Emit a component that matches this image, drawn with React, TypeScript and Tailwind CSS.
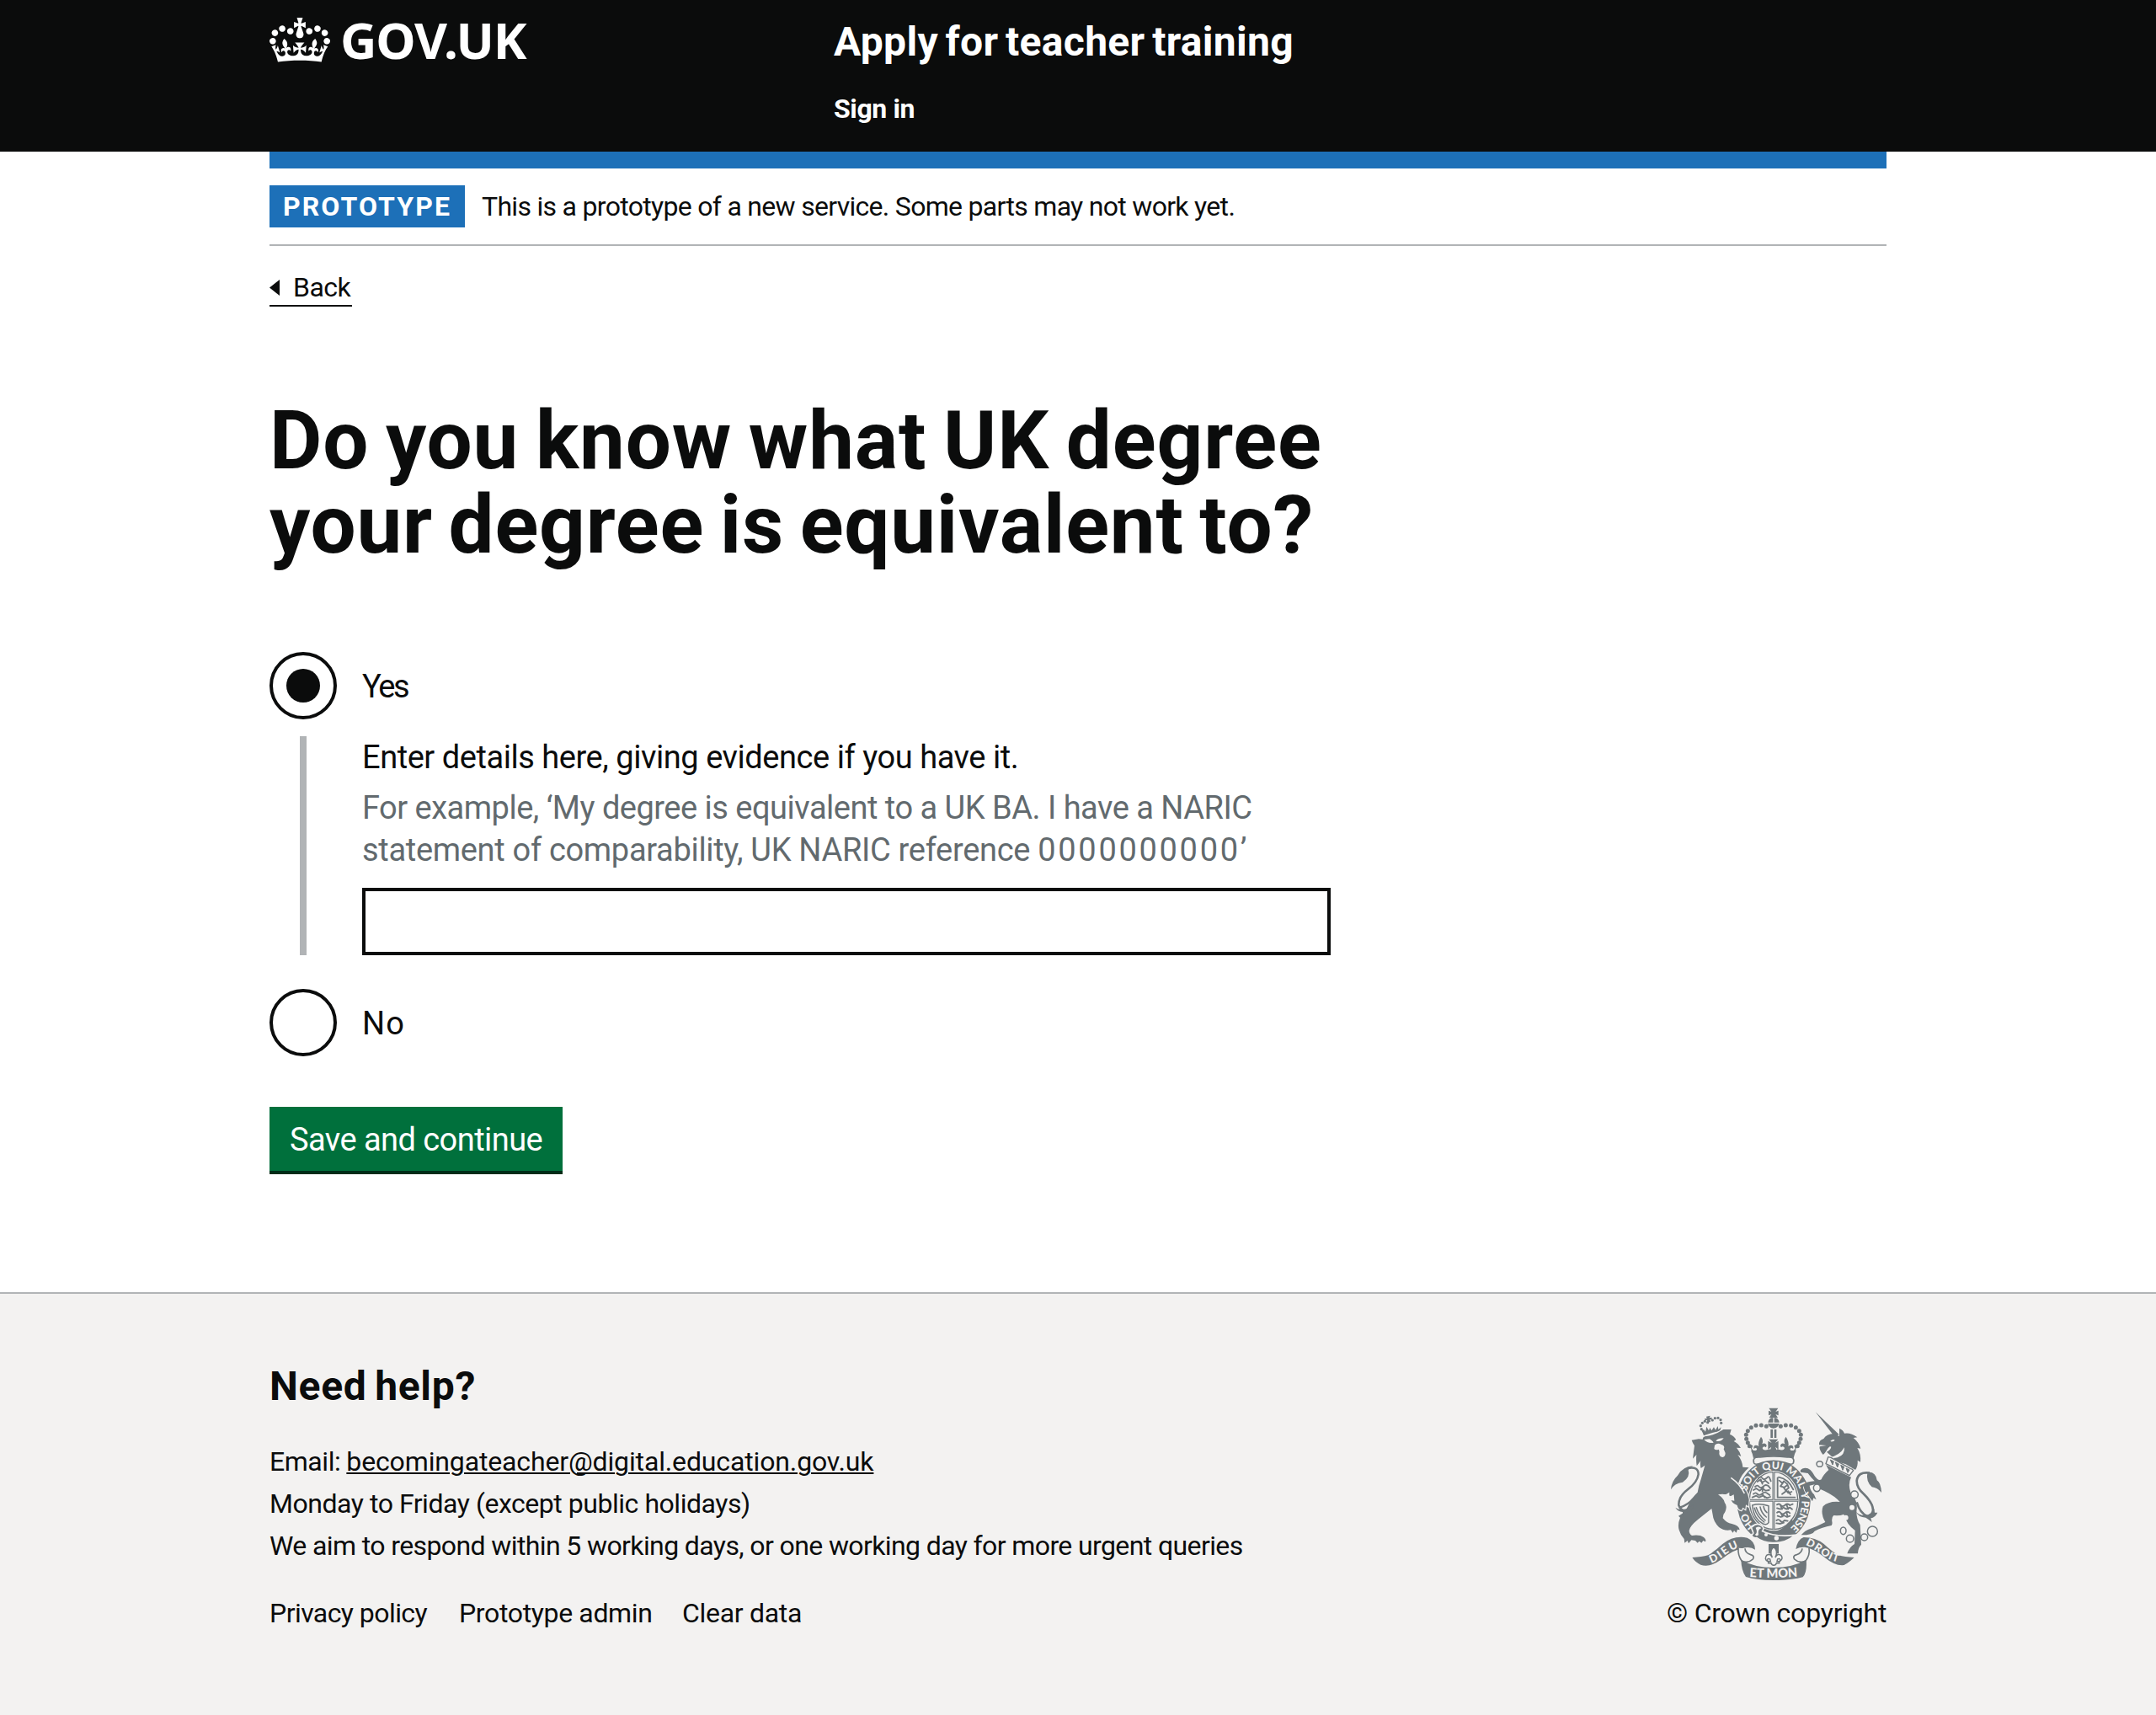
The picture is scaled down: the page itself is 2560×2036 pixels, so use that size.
import type { ReactNode } from "react";

const INK = "#6f777b";
const PAPER = "#f3f2f1";

function Crown() {
  return (
    <svg className="mt-px h-[53px] w-[72px] shrink-0" viewBox="0 0 132 97" aria-hidden="true">
      <path
        fill="currentColor"
        fillRule="evenodd"
        d="M25 30.2c3.5 1.5 7.7-.2 9.1-3.7 1.5-3.6-.2-7.8-3.9-9.2-3.6-1.4-7.6.3-9.1 3.9-1.4 3.5.3 7.5 3.9 9zM9 39.5c3.6 1.5 7.8-.2 9.2-3.7 1.5-3.6-.2-7.8-3.9-9.1-3.6-1.5-7.6.2-9.1 3.8-1.4 3.5.3 7.5 3.8 9zM4.4 57.2c3.5 1.5 7.7-.2 9.1-3.8 1.5-3.6-.2-7.7-3.9-9.1-3.5-1.5-7.6.3-9.1 3.8-1.4 3.5.3 7.6 3.9 9.1zm38.3-21.4c3.5 1.5 7.7-.2 9.1-3.8 1.5-3.6-.2-7.7-3.9-9.1-3.6-1.5-7.6.3-9.1 3.8-1.3 3.6.4 7.7 3.9 9.1zm64.4-5.6c-3.6 1.5-7.8-.2-9.1-3.7-1.5-3.6.2-7.8 3.8-9.2 3.6-1.4 7.7.3 9.2 3.9 1.3 3.5-.4 7.5-3.9 9zm15.9 9.3c-3.6 1.5-7.7-.2-9.1-3.7-1.5-3.6.2-7.8 3.7-9.1 3.6-1.5 7.7.2 9.2 3.8 1.5 3.5-.3 7.5-3.8 9zm4.7 17.7c-3.6 1.5-7.8-.2-9.2-3.8-1.5-3.6.2-7.7 3.9-9.1 3.6-1.5 7.7.3 9.2 3.8 1.3 3.5-.4 7.6-3.9 9.1zM89.3 35.8c-3.6 1.5-7.8-.2-9.2-3.8-1.4-3.6.2-7.7 3.9-9.1 3.6-1.5 7.7.3 9.2 3.8 1.4 3.6-.3 7.7-3.9 9.1zM69.7 17.7l8.9 4.7V9.3l-8.9 2.8c-.2-.3-.5-.6-.9-.9L72.4 0H59.6l3.5 11.2c-.3.3-.6.5-.9.9l-8.8-2.8v13.1l8.8-4.7c.3.3.6.7.9.9l-5 15.4v.1c-.2.8-.4 1.6-.4 2.4 0 4.1 3.1 7.5 7 8.1h.2c.3 0 .7.1 1 .1.4 0 .7 0 1-.1h.2c4-.6 7.1-4.1 7.1-8.1 0-.8-.1-1.7-.4-2.4V34l-5.1-15.4c.4-.2.7-.6 1-.9zM66 92.8c16.9 0 32.8 1.1 47.1 3.2 4-16.9 8.9-26.7 14-33.5l-9.6-3.4c1 4.9 1.1 7.2 0 10.2-1.5-1.4-3-4.3-4.2-8.7L108.6 76c2.8-2 5-3.2 7.5-3.3-4.4 9.4-10 11.9-13.6 11.2-4.3-.8-6.3-4.6-5.6-7.9 1-4.7 5.7-5.9 8-.5 4.3-8.7-3-11.4-7.6-8.8 7.1-7.2 7.9-13.5 2.1-21.1-8 6.1-8.1 12.3-4.5 20.8-4.7-5.4-12.1-2.5-9.5 6.2 3.4-5.2 7.9-2 7.2 3.1-.6 4.3-6.4 7.8-13.5 7.2-10.3-.9-10.9-8-11.2-13.8 2.5-.5 7.1 1.8 11 7.3L80.2 60c-4.1 4.4-8 5.3-12.3 5.4 1.4-4.4 8-11.6 8-11.6H55.5s6.4 7.2 7.9 11.6c-4.2-.1-8-1-12.3-5.4l1.4 16.4c3.9-5.5 8.5-7.7 10.9-7.3-.3 5.8-.9 12.8-11.1 13.8-7.2.6-12.9-2.9-13.5-7.2-.7-5 3.8-8.3 7.1-3.1 2.7-8.7-4.6-11.6-9.4-6.2 3.7-8.5 3.6-14.7-4.6-20.8-5.8 7.6-5 13.9 2.2 21.1-4.7-2.6-11.9.1-7.7 8.8 2.3-5.5 7.1-4.2 8.1.5.7 3.3-1.3 7.1-5.7 7.9-3.5.7-9-1.8-13.5-11.2 2.5.1 4.7 1.3 7.5 3.3l-4.7-15.4c-1.2 4.4-2.7 7.2-4.3 8.7-1.1-3-.9-5.3 0-10.2l-9.5 3.4c5 6.9 9.9 16.7 14 33.5 14.8-2.1 30.8-3.2 47.7-3.2z"
      />
    </svg>
  );
}

const crownDots: [number, number][] = [
  [412, 161], [394, 157], [375, 158], [358, 165], [346, 177], [340, 191], [341, 206], [346, 219], [352, 231],
];
const smallCrownDots: [number, number][] = [
  [181, 171], [178, 159], [184, 149], [193, 143], [203, 147], [220, 139], [229, 132], [240, 131], [249, 138], [251, 149],
];

function CrownHalf() {
  return (
    <g>
      {crownDots.map(([x, y]) => (
        <circle key={`${x}-${y}`} cx={x} cy={y} r="7.5" />
      ))}
      <path d="M393 198q10 12 4 26q10-6 15 2q3 6-2 10q-4-6-9-2l-3 4q2 8 12 8l14-4 4 6v12q-40 2-62 6q-4-22-20-44l18 8-4 10q8 12 16 6q6-6-2-8q-4 0-6 4q-4-12 6-14q6 0 11 4q-4-14 8-34z" />
    </g>
  );
}

function Crest() {
  return (
    <svg className="h-[205px] w-[250px]" viewBox="72 94 750 615" fill={INK} aria-label="Royal coat of arms">
      <defs>
        <path id="garter" d="M438 544C379 544 338 491 338 428C338 365 381 313 438 313C495 313 538 365 538 428C538 491 497 544 438 544" />
        <path id="ribbon-left" d="M216 648Q240 640 264 620Q290 598 330 588" />
        <path id="ribbon-right" d="M549 582Q583 596 612 620Q640 640 676 646" />
        <path id="ribbon-mid" d="M350 697Q437 704 526 695" />
      </defs>

      {/* garter and shield */}
      <ellipse cx="438" cy="428" rx="131" ry="148" />
      <ellipse cx="438" cy="426" rx="91" ry="107" fill={PAPER} />
      <ellipse cx="438" cy="426" rx="86" ry="102" fill="none" stroke={INK} strokeWidth="4" />
      <path d="M350 425h176M438 322v206" stroke={INK} strokeWidth="9" />
      <path d="M350 425h176M438 322v206" stroke={PAPER} strokeWidth="2" />
      <g fill="none" stroke={INK} strokeWidth="5.5" strokeLinecap="round" strokeLinejoin="round">
        <path d="M384 346q8-8 14 0t16-2q6-8 10 2l4 10M380 358l8-6 10 8 10-6 12 10M372 376q8-8 14 0t16-2q8-8 18 0l6 8M366 388l10-6 12 8 10-8 12 8 12-2M366 402q8-8 14 0t18-2q8-8 18 0l8 6M362 414l14-6 10 6 14-6 14 8 12-4M392 350l6 16M402 374l-4 18M398 402l8 12" />
        <path d="M452 344v70h62M456 342q34 6 52 44M458 354l12 10 4-8 12 10 6 14-10 8 8 10 12-4M470 364l-8 10 12 4 8 14-14 10M484 372l-10 8M490 392l8 12" />
        <path d="M362 442q26-8 58 2v60q-6 10-20 4q-34-18-38-66zM376 450q8 26 32 46M390 448q4 22 22 36M402 446q2 14 12 22M370 452q6 28 34 50" strokeWidth="4.5" />
        <path d="M450 440q8-6 14 2t16-2q8-6 16 2l10-4M450 452l12 4 10-6 12 6 12-6 8 6M450 468q8-6 14 2t16-2q8-6 16 2M452 480l12 4 10-6 12 6 10-4M448 496q8-6 14 2t14-2l12 2M448 506l14 2 12-4M462 442l6 14M484 440l6 16M464 470l6 12M484 468l4 14" />
      </g>
      <path d="M462 528q26-14 40-38l14 24q-18 26-42 38z" />

      {/* imperial crown */}
      <path d="M421 96h33l-9 13 10-4v17l-10-4 8 12h-31l8-12-10 4v-17l10 4z" />
      <path d="M430 131h6v16h-18q2-12 12-16zM440 131h6q10 4 12 16h-18zM417 151h41q-4 16-21 17q-16-1-20-17zM427 172h8v30h-8zM440 172h8v30h-8z" />
      <path d="M421 207h33l-11 13 12-7v30l-11-9 8 20h-30l8-20-12 9v-30l13 7z" />
      <CrownHalf />
      <g transform="translate(875 0) scale(-1 1)">
        <CrownHalf />
      </g>
      <path d="M357 246q16 3 80-1q64 4 82 1q-8 14-10 28q-72-14-143 0q-2-14-9-28z" />
      <path d="M368 292q-8-24 22-21q48-6 96 0q30-3 22 21q-6 8-30-2q-40-12-80 0q-26 10-30 2z" fill={PAPER} stroke={INK} strokeWidth="5" />

      {/* lion */}
      {smallCrownDots.map(([x, y]) => (
        <circle key={`${x}-${y}`} cx={x} cy={y} r="4.8" />
      ))}
      <path d="M198 126l14-3-3 8 8-2 2 9-8-2 2 9-11 2-1-9-7 4-2-9 8 1zM181 176l8-4 6 8 4-18 8 14 4-10 6 10 8-12 6 10 8-14 2 12 10-8q-4 12-2 14-36 6-60 16-2-8-8-18z" />
      <path
        d="M171 206l14 1q0-8 8-10q34-3 66-25l28 0-5 17q16 6 22 20l-8 5q16 8 25 24l-15-1q12 14 16 31l-12-6q16 20 18 44l22 2q-28 24-38 56q34 20 38 58l-2 24-9-6-2 16-9-6-5 10q-12-2-15-18q-20-8-24-24l6-6q-24-14-50-8q22 14 24 30q10 10 1 32q-8 8-8 22q14 18 32 20q26 6 28 22l-8-2-4 12-8-8-4 8-8-10q-24 4-42-10q-20-20-22-44l-4-22q-20 16-48 38q-30 24-32 40q0 12 10 18q28-4 42 6q10 8 6 16l-8-4-6 8-8-6-6 6-8-8-14-2-10 12-4-10-10 8-2-14q-14-16-18-32q-6-20 4-44l-6-6q24-10 38-44q16-28 30-40q4-24 12-46l14-50-14 10q-4-14-1-26l-14 18q-3-20-1-40l-13 14q4-30 6-46q-6-8-10-20z"
        stroke={PAPER}
        strokeWidth="7"
        paintOrder="stroke"
      />
      <path d="M190 208l20-2q12 8 14 13q-20 4-34-11zM232 213q8-10 28-10q-8 14-28 10zM228 228q10-10 24-2q14 4 8 16l6 14q0 14-10 15q-12-2-12-14q2-8-2-14q-10 4-16-2z" fill={PAPER} />
      <path d="M286 344q32 22 48 56" fill="none" stroke={PAPER} strokeWidth="5" />
      <path d="M244 402q22 6 36-6l0 16 16-8 2 22-12-2-8 10q-12-20-34-32z" fill={PAPER} />
      <path d="M72 386q2-30 24-50q18-32 54-34l-16 14q8 26-20 44q-30 4-42 26z" />
      <path d="M132 310q38-8 38 22q-4 28-38 54q-34 26-32 56q6 18 26 22M104 450q30-10 48-32l26-24" fill="none" stroke={INK} strokeWidth="7.5" />
      <path d="M88 450q14 12 42 4q14-6 22-16q2 18-14 28q-20 6-20 14q-6-4-4-14q-18-2-26-16z" />

      {/* unicorn */}
      <path d="M587 110l84 80-16 8z" />
      <path d="M672 196l0-28q14 6 18 18q22-4 46 14l-14 2q20 16 26 38l-12-2q14 22 11 50l-10-6q2 20-8 34l-34-20q-34-8-44-22l-24-22q14-8 16-18q-6-6-16 12q-10 16-14 15q-14-18-11-28l24-4-26-2q-2-16 16-22q10-16 36-18z" />
      <path d="M640 213q10-8 16-3q-4 6-14 5zM690 236q2 28-24 36q-16 4-30 0q36-6 54-36z" fill={PAPER} />
      <path
        d="M624 298l90 44q-12 24-2 54q26 28 22 60q-4 28 12 56l4 70q-12 12-12 32l-38 0q8-24 26-34l2-48q-30-22-40-58q-14 6-36 4q-8 6-6 22q2 10-2 14q-34 6-60 20q-6 14-48 14q14-16 26-20q30-10 60-26q-18-32-8-56q20-20 60-16q-22-26-76-48q-10-6-14-14l-18 4q2 18 16 32l8 18-10-6-4 12-14-20q-16-14-18-40q10-10 40-12q-14-14-24-28l-26-4q-4-10 12-14q22-4 38 28q14 20 24 12q6-16 26-34z"
        stroke={PAPER}
        strokeWidth="5"
        paintOrder="stroke"
      />
      <path d="M545 348l-16 22 12 10 14-20z" />
      <path d="M632 270l-8 24 84 42 14-18q-4-6-10-6l-70-40z" fill={PAPER} stroke={INK} strokeWidth="4" />
      <path d="M640 280l12 6-4 12zM658 289l12 6-5 12zM677 299l12 6-5 12zM696 310l12 6-6 10z" stroke={INK} strokeWidth="3" />
      <g fill={PAPER}>
        <circle cx="717" cy="450" r="9" />
        <circle cx="695" cy="486" r="9" />
        <circle cx="584" cy="322" r="7" />
      </g>
      <g fill="none" stroke={INK} strokeWidth="4.5">
        <ellipse cx="602" cy="295" rx="11" ry="10" />
        <ellipse cx="592" cy="380" rx="12" ry="13" fill={PAPER} />
        <circle cx="726" cy="404" r="13" fill={PAPER} />
        <ellipse cx="686" cy="533" rx="10" ry="13" />
        <ellipse cx="710" cy="561" rx="13" ry="13" />
        <ellipse cx="761" cy="556" rx="12" ry="12" />
        <circle cx="790" cy="535" r="18" />
      </g>
      <path d="M768 325q34-6 38 28q14 8 16 44q-14-18-34-20q-22-20-16-52z" />
      <path d="M780 327q-42-6-46 28q0 26 26 48q32 32 32 56q-2 18-20 22q-26-10-38-50" fill="none" stroke={INK} strokeWidth="8" />
      <path d="M730 464q10 14 32 14q24 0 34-24l2 14 10 0q-8 18-24 20l4 14q-12-10-22-16q-26 0-36-22z" />

      <g fill={PAPER} fontFamily="Lato" fontWeight="900" fontSize="37">
        <text>
          <textPath href="#garter" startOffset="74" textLength="56" lengthAdjust="spacing">HO</textPath>
        </text>
        <text>
          <textPath href="#garter" startOffset="206" textLength="258" lengthAdjust="spacing">SOIT QUI MAL</textPath>
        </text>
        <text>
          <textPath href="#garter" startOffset="478" textLength="138" lengthAdjust="spacing">Y PENSE</textPath>
        </text>
      </g>
      {/* buckle and strap */}
      <path d="M362 518q16-16 34-2q10 8 2 18q44 22 116 14q-34 30-80 28q-36-2-56-18q-18 2-18-12q8-2 4-10t-6-18z" stroke={PAPER} strokeWidth="5" />
      <path d="M374 522q14-8 20 2q-14 4-10 24q-8 6-12-2q10-6 2-24z" fill={PAPER} />
      <circle cx="411" cy="547" r="6" fill={PAPER} />
      <circle cx="448" cy="559" r="8" fill={PAPER} />

      {/* motto ribbon */}
      <path d="M148 628q34-2 56-8q24-14 52-40q40-32 88-22q28 12 28 42q-14-10-36-7q-40 6-84 42q-40 30-74 19q-20-10-30-26z" />
      <path d="M725 628q-34-2-56-8q-24-14-52-40q-30-24-72-24q-22 8-28 42q14-8 32-7q34 6 70 36q38 32 70 28q16-8 36-27z" />
      <path d="M312 594q-2 26 12 46q22 10 40-6q8-12-8-16q-20-6-20-22M564 594q4 26-12 46q-22 10-40-6q-8-12 8-16q18-6 20-22" fill={PAPER} stroke={INK} strokeWidth="5" />
      <path d="M322 636q48 28 115 28q68 0 117-28q4 44-12 62q-42 12-105 11q-60 0-98-12q-16-22-17-61z" />
      <g fill={PAPER} fontFamily="Lato" fontWeight="900">
        <text fontSize="39">
          <textPath href="#ribbon-left" startOffset="0" textLength="112" lengthAdjust="spacing">DIEU</textPath>
        </text>
        <text fontSize="38">
          <textPath href="#ribbon-right" startOffset="2" textLength="132" lengthAdjust="spacing">DROIT</textPath>
        </text>
        <text fontSize="45">
          <textPath href="#ribbon-mid" startOffset="2" textLength="172" lengthAdjust="spacingAndGlyphs">ET MON</textPath>
        </text>
      </g>

      {/* fleur-de-lis */}
      <path d="M420 580h36v34h-36z" />
      <path d="M438 590q18 18 6 38q8-16 20-8q10 12-4 22q4-14-8-8l-2 8h8v6h-10q-2 8-9 8t-10-8h-10v-6h8l-2-8q-12-6-8 8q-14-8-4-22q12-8 20 8q-12-20 5-38z" fill={PAPER} stroke={INK} strokeWidth="4.5" />
    </svg>
  );
}

function Radio({ checked = false, children }: { checked?: boolean; children: ReactNode }) {
  return (
    <label className="flex h-20 items-center gap-[30px]">
      <span className="flex size-20 shrink-0 items-center justify-center rounded-full border-4 border-[#0b0c0c]">
        {checked && <span className="size-10 rounded-full bg-[#0b0c0c]" />}
      </span>
      <span className="pt-0.5 text-[38px] leading-[50px]">{children}</span>
    </label>
  );
}

export default function App() {
  return (
    <div className="flex h-[2036px] flex-col overflow-hidden bg-white font-['Roboto',sans-serif] text-[#0b0c0c]">
      <header className="h-[180px] bg-[#0b0c0c] pt-5 text-white">
        <div className="mx-auto flex w-[1920px]">
          <div className="flex h-[60px] w-[670px] gap-[12px]">
            <Crown />
            <span className="-mt-[3px] font-['Noto_Sans',sans-serif] text-[60px] leading-[60px] font-bold tracking-[-1.1px]">
              GOV.UK
            </span>
          </div>
          <div>
            <div className="text-[48px] leading-[60px] font-bold tracking-[0.3px] [word-spacing:-3.5px]">
              Apply for teacher training
            </div>
            <div className="mt-[29px] text-[32px] leading-10 font-bold tracking-[-0.39px]">Sign in</div>
          </div>
        </div>
      </header>

      <main className="mx-auto w-[1920px]">
        <div className="h-5 bg-[#1d70b8]" />
        <div className="flex border-b-2 border-[#b1b4b6] py-5 text-[32px] leading-[50px]">
          <strong className="w-[232px] bg-[#1d70b8] pl-4 font-bold tracking-[2.11px] text-white">PROTOTYPE</strong>
          <span className="ml-5 tracking-[-0.7px]">
            This is a prototype of a new service. Some parts may not work yet.
          </span>
        </div>

        <a className="mt-[33px] flex w-[98px] items-center border-b-2 border-[#0b0c0c] pb-[5px] text-[32px] leading-8 tracking-[-0.5px]">
          <svg className="h-[19px] w-3 shrink-0" viewBox="0 0 12 19" aria-hidden="true">
            <path d="M12 0v19L0 9.5z" fill="currentColor" />
          </svg>
          <span className="ml-4">Back</span>
        </a>

        <h1 className="mt-[109px] text-[96px] leading-[100px] font-bold">
          <span className="block tracking-[0.86px] [word-spacing:-5px]">Do you know what UK degree</span>
          <span className="block tracking-[0.8px] [word-spacing:-6px]">your degree is equivalent to?</span>
        </h1>

        <div className="mt-[101px]">
          <Radio checked>
            <span className="tracking-[-2.4px]">Yes</span>
          </Radio>
          <div className="mt-5 ml-9 border-l-8 border-[#b1b4b6] pl-[66px] text-[38px] leading-[50px]">
            <div className="tracking-[-0.45px]">Enter details here, giving evidence if you have it.</div>
            <div className="mt-2.5 text-[#626a6e]">
              <span className="block tracking-[-0.5px]">For example, ‘My degree is equivalent to a UK BA. I have a NARIC</span>
              <span className="block tracking-[-0.31px]">
                statement of comparability, UK NARIC reference <span className="tracking-[2.7px]">0000000000’</span>
              </span>
            </div>
            <input className="mt-5 block h-20 w-[1150px] border-4 border-[#0b0c0c] bg-white" />
          </div>
          <div className="mt-10">
            <Radio>
              <span className="tracking-[1.2px]">No</span>
            </Radio>
          </div>
        </div>

        <button className="mt-[60px] block h-[76px] w-[348px] bg-[#00703c] pt-0.5 pl-6 text-left text-[38px] leading-[50px] tracking-[-0.55px] text-white shadow-[0_4px_0_#002d18]">
          Save and continue
        </button>
      </main>

      <footer className="mt-[144px] grow border-t-2 border-[#b1b4b6] bg-[#f3f2f1] pt-20">
        <div className="mx-auto flex w-[1920px] items-end justify-between text-[32px] leading-[50px]">
          <div>
            <h2 className="text-[48px] leading-[60px] font-bold tracking-[0.7px] [word-spacing:-3px]">Need help?</h2>
            <div className="mt-[34px]">
              <div>
                <span className="tracking-[-0.44px]">Email:</span>
                <a className="ml-[7px] tracking-[-0.14px] underline decoration-2 underline-offset-[2px]">
                  becomingateacher@digital.education.gov.uk
                </a>
              </div>
              <div className="tracking-[-0.46px]">Monday to Friday (except public holidays)</div>
              <div className="tracking-[-0.61px]">
                We aim to respond within 5 working days, or one working day for more urgent queries
              </div>
            </div>
            <div className="mt-[30px] flex">
              <a className="w-[225px] tracking-[-0.56px]">Privacy policy</a>
              <a className="w-[265px] tracking-[-0.35px]">Prototype admin</a>
              <a className="tracking-[-0.3px]">Clear data</a>
            </div>
          </div>
          <div className="flex w-[261px] flex-col">
            <div className="ml-[5px]">
              <Crest />
            </div>
            <div className="mt-[14px] tracking-[-0.22px] whitespace-nowrap">© Crown copyright</div>
          </div>
        </div>
      </footer>
    </div>
  );
}
